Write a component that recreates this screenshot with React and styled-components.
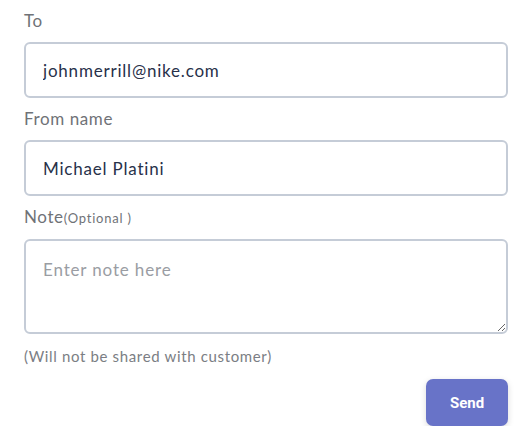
import React from "react";
import styled, { createGlobalStyle } from "styled-components";

const Global = createGlobalStyle`
  html, body { margin: 0; padding: 0; background: #ffffff; }
  body { font-family: "Lato", "Noto Sans", sans-serif; }
  * { box-sizing: border-box; }
`;

const Form = styled.form`
  width: 522px;
  padding: 10px 14px 0 24px;
  display: flex;
  flex-direction: column;
`;

const Label = styled.label`
  display: block;
  font-size: 17px;
  line-height: 22px;
  letter-spacing: 0.6px;
  color: #6f7277;
  margin-top: ${(p) => p.$top || 0}px;
  margin-bottom: 10px;
`;

const Optional = styled.span`
  font-size: 13px;
  letter-spacing: 0.8px;
  color: #6f7277;
`;

const Input = styled.input`
  width: 100%;
  height: 56px;
  border: 2px solid #c5ccd7;
  border-radius: 6px;
  padding: 0 17px;
  font-family: inherit;
  font-size: 17px;
  letter-spacing: 0.8px;
  color: #28314a;
  outline: none;
`;

const TextArea = styled.textarea`
  width: 100%;
  height: 95px;
  border: 2px solid #c5ccd7;
  border-radius: 6px;
  padding: 18px 17px;
  font-family: inherit;
  font-size: 17px;
  letter-spacing: 0.85px;
  color: #28314a;
  outline: none;
  resize: vertical;
  display: block;
  &::placeholder { color: #9a9da3; }
`;

const Helper = styled.p`
  margin: 11px 0 0;
  font-size: 15px;
  line-height: 22px;
  letter-spacing: 0.65px;
  color: #7b7e84;
`;

const Actions = styled.div`
  display: flex;
  justify-content: flex-end;
  margin-top: 12px;
`;

const SendButton = styled.button`
  width: 82px;
  height: 47px;
  border: none;
  border-radius: 7px;
  background: #6873c8;
  color: #ffffff;
  font-family: "Roboto", sans-serif;
  font-weight: 700;
  font-size: 15px;
  box-shadow: 0 2px 6px rgba(0, 0, 0, 0.15);
  cursor: pointer;
`;

export default function App() {
  return (
    <>
      <Global />
      <Form onSubmit={(e) => e.preventDefault()}>
        <Label>To</Label>
        <Input defaultValue="johnmerrill@nike.com" />
        <Label $top={10}>From name</Label>
        <Input defaultValue="Michael Platini" />
        <Label $top={10}>
          Note<Optional>(Optional )</Optional>
        </Label>
        <TextArea placeholder="Enter note here" />
        <Helper>(Will not be shared with customer)</Helper>
        <Actions>
          <SendButton type="submit">Send</SendButton>
        </Actions>
      </Form>
    </>
  );
}
